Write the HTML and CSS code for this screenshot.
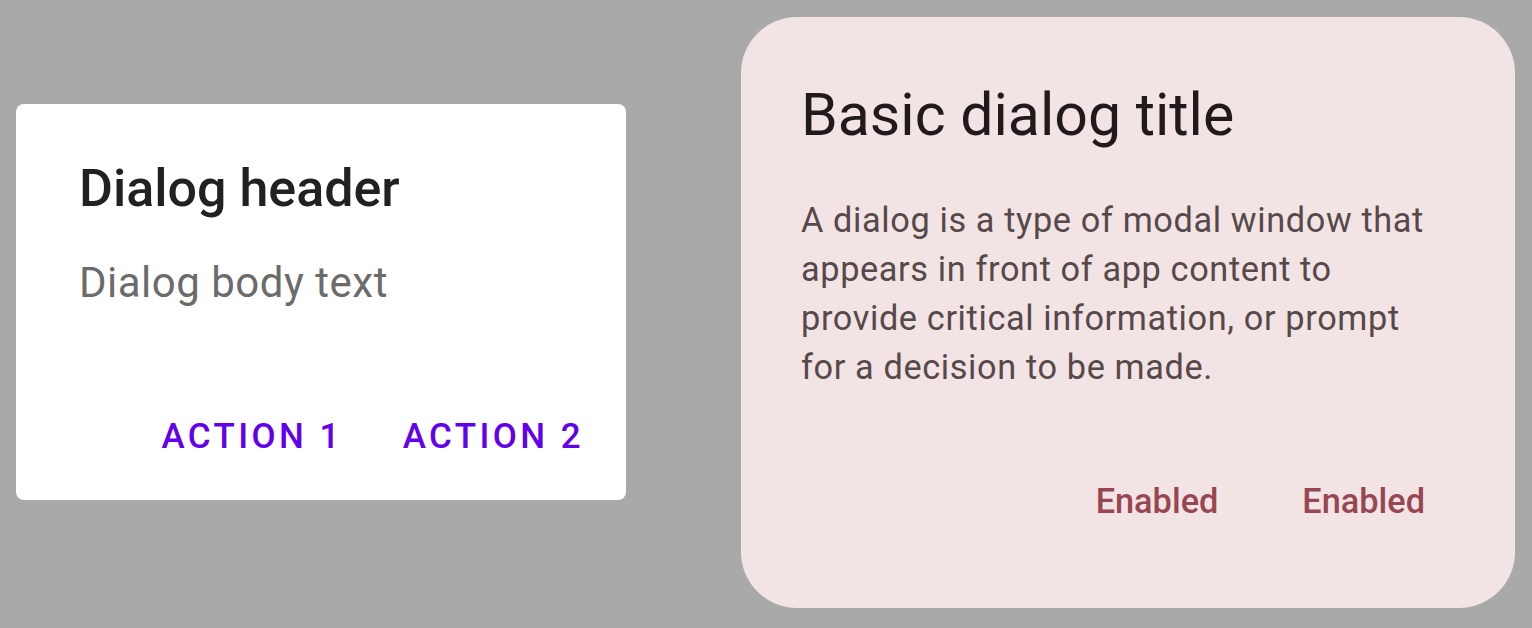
FILE: index.html
```html
<!DOCTYPE html>
<html>
<head>
<meta charset="utf-8">
<link rel="stylesheet" href="styles.css">
</head>
<body>
<div class="stage">
  <div class="card-old">
    <h1 class="old-title">Dialog header</h1>
    <p class="old-body">Dialog body text</p>
    <div class="old-actions">
      <span class="old-btn">ACTION 1</span>
      <span class="old-btn">ACTION 2</span>
    </div>
  </div>
  <div class="card-m3">
    <h1 class="m3-title">Basic dialog title</h1>
    <p class="m3-body">A dialog is a type of modal window that appears in front of app content to provide critical information, or prompt for a decision to be made.</p>
    <div class="m3-actions">
      <span class="m3-btn">Enabled</span>
      <span class="m3-btn">Enabled</span>
    </div>
  </div>
</div>
</body>
</html>
```
FILE: styles.css
```css
html, body {
  margin: 0;
  padding: 0;
  background: #a9a9a9;
  font-family: Roboto, "Liberation Sans", sans-serif;
}
.stage {
  display: flex;
  align-items: flex-start;
  gap: 115px;
  padding: 17px 0 0 16px;
  height: 628px;
  box-sizing: border-box;
}
.card-old {
  margin-top: 87px;
  width: 610px;
  box-sizing: border-box;
  background: #ffffff;
  border-radius: 8px;
  padding: 53px 42px 39px 63px;
}
.old-title {
  margin: 0;
  font-size: 52px;
  line-height: 64px;
  font-weight: 500;
  color: #212121;
  letter-spacing: 0;
}
.old-body {
  margin: 36px 0 0;
  font-size: 42px;
  line-height: 52px;
  font-weight: 400;
  color: #6b6b6b;
  letter-spacing: 0.5px;
}
.old-actions {
  margin-top: 103px;
  display: flex;
  justify-content: flex-end;
  gap: 60px;
}
.old-btn {
  font-size: 35px;
  line-height: 49px;
  font-weight: 500;
  letter-spacing: 3.4px;
  color: #6200ee;
}
.card-m3 {
  width: 774px;
  box-sizing: border-box;
  background: #f2e4e4;
  border-radius: 56px;
  padding: 59px 80px 82px 60px;
}
.m3-title {
  margin: 0;
  font-size: 59px;
  line-height: 78px;
  font-weight: 400;
  color: #201a1b;
}
.m3-body {
  margin: 42px 0 0;
  font-size: 34.3px;
  line-height: 49px;
  font-weight: 400;
  color: #574849;
  letter-spacing: 0.62px;
}
.m3-actions {
  margin-top: 85px;
  margin-right: 10px;
  display: flex;
  justify-content: flex-end;
  gap: 84px;
}
.m3-btn {
  font-size: 34.3px;
  line-height: 49px;
  font-weight: 500;
  letter-spacing: 0;
  color: #984652;
}
```
